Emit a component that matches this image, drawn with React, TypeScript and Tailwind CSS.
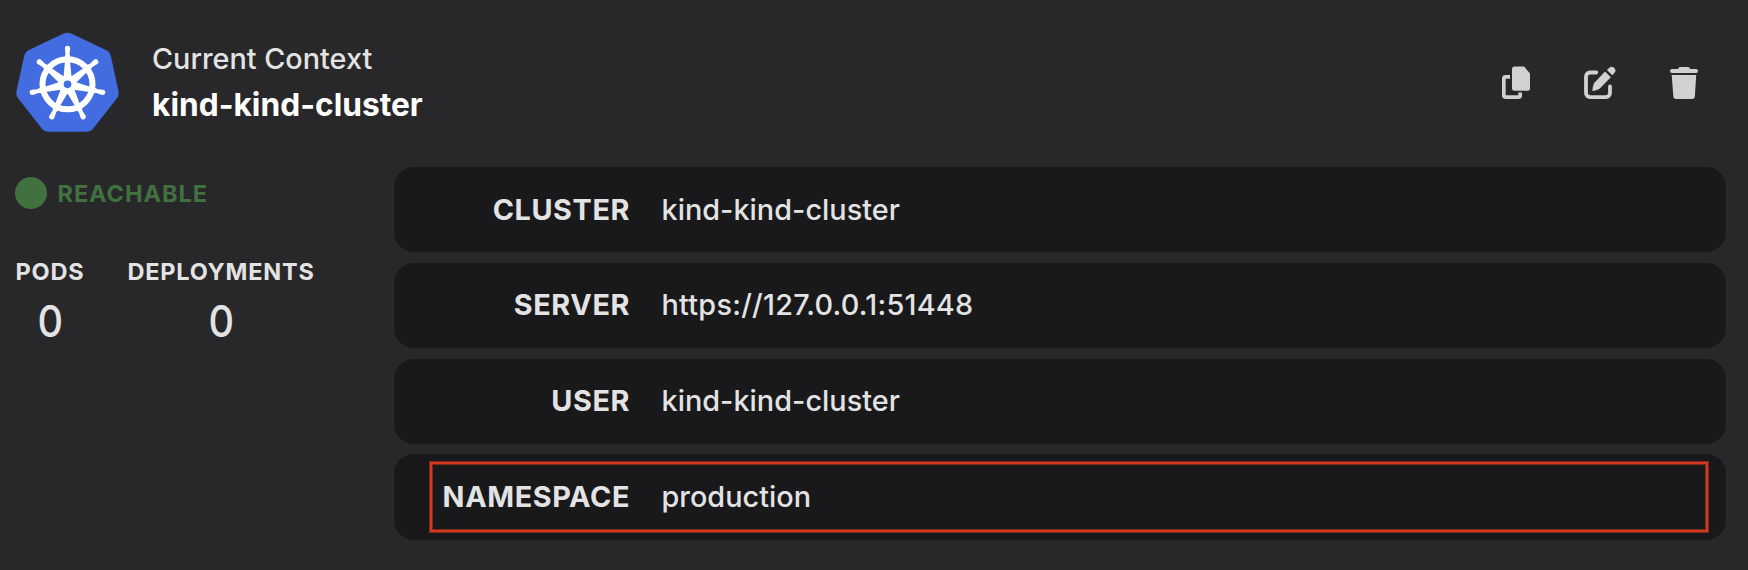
import React from 'react';

const rows = [
  { label: 'CLUSTER', value: 'kind-kind-cluster', tracking: 'tracking-[0.03px]' },
  { label: 'SERVER', value: 'https://127.0.0.1:51448', tracking: 'tracking-[0.25px]' },
  { label: 'USER', value: 'kind-kind-cluster', tracking: 'tracking-[0.03px]' },
  { label: 'NAMESPACE', value: 'production', tracking: 'tracking-[0.03px]' },
];

const stats = [
  { label: 'PODS', count: 0 },
  { label: 'DEPLOYMENTS', count: 0 },
];

const spokes = [0, 1, 2, 3, 4, 5, 6].map((i) => (i * 360) / 7);

function KubernetesLogo() {
  return (
    <svg className="h-[100px] w-[104px]" viewBox="-154.5 -157 312 300">
      <path
        d="M-8 -145 Q0 -148 8 -145 L112 -96 Q120 -92 122 -84 L145 22 Q147 30 142 37 L72 126 Q66 134 57 134 L-57 134 Q-66 134 -72 126 L-142 37 Q-147 30 -145 22 L-122 -84 Q-120 -92 -112 -96 Z"
        fill="#436ce0"
        stroke="#436ce0"
        strokeWidth="16"
        strokeLinejoin="round"
      />
      <circle r="75" fill="none" stroke="#fff" strokeWidth="18" />
      {spokes.map((a) => (
        <g key={a} transform={`rotate(${a})`} fill="#fff">
          <path d="M-8 -108 Q-8 -116 0 -116 Q8 -116 8 -108 L6 -91 L9 -80 L-9 -80 L-6 -91 Z" />
          <path d="M-7.5 -70 L7.5 -70 L12 -22 L-12 -22 Z" />
        </g>
      ))}
      <circle r="28" fill="#fff" />
      <circle r="11.5" fill="#436ce0" />
    </svg>
  );
}

function CopyIcon() {
  return (
    <svg className="h-[34px] w-7" viewBox="0 -0.5 28 34" fill="#d1d1d1">
      <path d="M8 10.4H3.8a2 2 0 0 0-2 2V28.7a2 2 0 0 0 2 2H16.2a2 2 0 0 0 2-2V26" fill="none" stroke="#d1d1d1" strokeWidth="3.7" />
      <path d="M12.5 0H22l6 7V21.8a2.5 2.5 0 0 1-2.5 2.5h-13A2.5 2.5 0 0 1 10 21.8V2.5A2.5 2.5 0 0 1 12.5 0z" />
    </svg>
  );
}

function EditIcon() {
  return (
    <svg className="h-[34px] w-8" viewBox="0 -0.5 32 34" fill="#d1d1d1">
      <path d="M12.3 6H6a4 4 0 0 0-4 4V26.6a4 4 0 0 0 4 4H22a4 4 0 0 0 4-4V20" fill="none" stroke="#d1d1d1" strokeWidth="3.8" strokeLinecap="round" />
      <path d="M21.1 5L26.8 10.8L15.6 22.2Q12.8 24.2 8.3 24.4Q8.6 19.6 10.2 16.4Z" />
      <path d="M22.9 3.6L25.3 1.3c1.4-1.4 3.3-1.3 4.7 0l.4.4c1.4 1.4 1.5 3.1.1 4.6L28.3 8.7z" />
    </svg>
  );
}

function TrashIcon() {
  return (
    <svg className="h-[34px] w-7" viewBox="0 -0.5 28 34" fill="#d1d1d1">
      <path d="M8 3c0-1.6 1-2.6 2.4-2.6h7.4c1.4 0 2.4 1 2.4 2.6z" />
      <rect x="0" y="2.5" width="28" height="4" rx="2" />
      <path d="M1.7 8.5H26.2L24.9 29.6a3 3 0 0 1-3 2.9H6.3a3 3 0 0 1-3-2.9Z" />
    </svg>
  );
}

export default function App() {
  return (
    <main className="flex h-[570px] w-[1748px] flex-col bg-[#28282a] font-['Inter',sans-serif] text-[#e3e3e3]">
      <header className="flex h-[167px] items-start pt-8 pr-[50px] pl-4">
        <KubernetesLogo />
        <div className="ml-8 flex flex-col pt-1">
          <span className="text-[28.8px] leading-[46px] font-[450] whitespace-nowrap">Current Context</span>
          <strong className="text-[31.7px] leading-[46px] font-bold text-white">kind-kind-cluster</strong>
        </div>
        <nav className="mt-[34px] ml-auto flex gap-[54px]">
          <button aria-label="Copy"><CopyIcon /></button>
          <button aria-label="Edit"><EditIcon /></button>
          <button aria-label="Delete"><TrashIcon /></button>
        </nav>
      </header>
      <div className="flex">
        <section className="w-[394px] pt-2.5 pl-[15px]">
          <div className="flex h-8 items-start">
            <span className="size-8 rounded-full bg-[#41713f]" />
            <span className="ml-[10.5px] pt-[3px] text-[23.5px] leading-7 font-bold tracking-[0.95px] text-[#41713f]">REACHABLE</span>
          </div>
          <div className="mt-[49px] flex gap-[43px] pl-[0.5px]">
            {stats.map((s) => (
              <div key={s.label} className="flex flex-col items-center">
                <span className="text-[23.5px] leading-7 font-bold tracking-[0.8px]">{s.label}</span>
                <span className="mt-[13px] scale-x-[0.9] text-[44px] leading-[44px] font-medium">{s.count}</span>
              </div>
            ))}
          </div>
        </section>
        <section className="relative flex w-[1332px] flex-col gap-[10.5px]">
          {rows.map((r) => (
            <div key={r.label} className="flex h-[85.3px] items-center rounded-[20px] bg-[#19191b] pb-px text-[28.8px]">
              <span className="w-[236px] text-right font-bold tracking-[0.6px]">{r.label}</span>
              <span className={`ml-[31.5px] font-[450] ${r.tracking}`}>{r.value}</span>
            </div>
          ))}
          <div className="absolute top-[295px] left-9 h-[70px] w-[1278px] border-2 border-[#d8371f] shadow-[0_0_0_1px_#7a2a1f,inset_0_0_0_1px_#7a2a1f]" />
        </section>
      </div>
    </main>
  );
}
